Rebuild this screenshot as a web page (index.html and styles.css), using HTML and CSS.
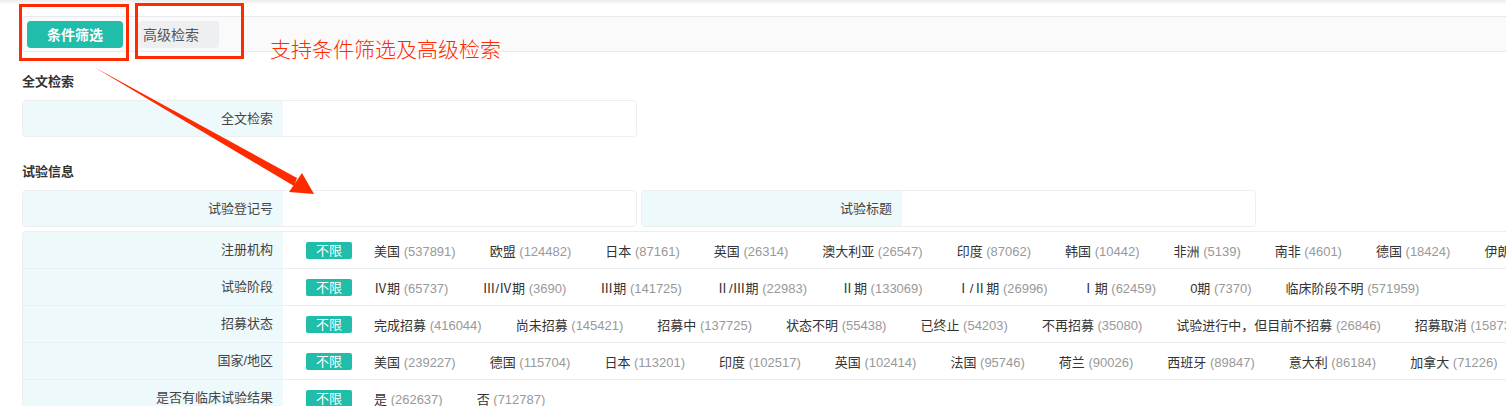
FILE: index.html
```html
<!DOCTYPE html>
<html lang="zh-CN">
<head>
<meta charset="utf-8">
<title>条件筛选</title>
<link rel="stylesheet" href="styles.css">
</head>
<body>
<div class="top-shade"></div>
<div class="page">
  <div class="tabs">
    <button class="tab tab-active">条件筛选</button>
    <button class="tab tab-plain">高级检索</button>
  </div>

  <h3 class="section-title">全文检索</h3>
  <div class="field-row">
    <div class="field">
      <div class="field-label">全文检索</div>
      <div class="field-input"></div>
    </div>
  </div>

  <h3 class="section-title section-title-2">试验信息</h3>
  <div class="field-row">
    <div class="field">
      <div class="field-label">试验登记号</div>
      <div class="field-input"></div>
    </div>
    <div class="field">
      <div class="field-label">试验标题</div>
      <div class="field-input"></div>
    </div>
  </div>

  <div class="filters">
    <div class="filter-row">
      <div class="filter-label">注册机构</div>
      <div class="filter-items">
        <span class="tag">不限</span>
        <span class="item">美国 <em>(537891)</em></span>
        <span class="item">欧盟 <em>(124482)</em></span>
        <span class="item">日本 <em>(87161)</em></span>
        <span class="item">英国 <em>(26314)</em></span>
        <span class="item">澳大利亚 <em>(26547)</em></span>
        <span class="item">印度 <em>(87062)</em></span>
        <span class="item">韩国 <em>(10442)</em></span>
        <span class="item">非洲 <em>(5139)</em></span>
        <span class="item">南非 <em>(4601)</em></span>
        <span class="item">德国 <em>(18424)</em></span>
        <span class="item">伊朗 <em>(9021)</em></span>
      </div>
    </div>
    <div class="filter-row">
      <div class="filter-label">试验阶段</div>
      <div class="filter-items">
        <span class="tag">不限</span>
        <span class="item">Ⅳ期 <em>(65737)</em></span>
        <span class="item">Ⅲ/Ⅳ期 <em>(3690)</em></span>
        <span class="item">Ⅲ期 <em>(141725)</em></span>
        <span class="item">Ⅱ/Ⅲ期 <em>(22983)</em></span>
        <span class="item">Ⅱ期 <em>(133069)</em></span>
        <span class="item">Ⅰ/Ⅱ期 <em>(26996)</em></span>
        <span class="item">Ⅰ期 <em>(62459)</em></span>
        <span class="item">0期 <em>(7370)</em></span>
        <span class="item">临床阶段不明 <em>(571959)</em></span>
      </div>
    </div>
    <div class="filter-row">
      <div class="filter-label">招募状态</div>
      <div class="filter-items">
        <span class="tag">不限</span>
        <span class="item">完成招募 <em>(416044)</em></span>
        <span class="item">尚未招募 <em>(145421)</em></span>
        <span class="item">招募中 <em>(137725)</em></span>
        <span class="item">状态不明 <em>(55438)</em></span>
        <span class="item">已终止 <em>(54203)</em></span>
        <span class="item">不再招募 <em>(35080)</em></span>
        <span class="item">试验进行中，但目前不招募 <em>(26846)</em></span>
        <span class="item">招募取消 <em>(15873)</em></span>
      </div>
    </div>
    <div class="filter-row">
      <div class="filter-label">国家/地区</div>
      <div class="filter-items">
        <span class="tag">不限</span>
        <span class="item">美国 <em>(239227)</em></span>
        <span class="item">德国 <em>(115704)</em></span>
        <span class="item">日本 <em>(113201)</em></span>
        <span class="item">印度 <em>(102517)</em></span>
        <span class="item">英国 <em>(102414)</em></span>
        <span class="item">法国 <em>(95746)</em></span>
        <span class="item">荷兰 <em>(90026)</em></span>
        <span class="item">西班牙 <em>(89847)</em></span>
        <span class="item">意大利 <em>(86184)</em></span>
        <span class="item">加拿大 <em>(71226)</em></span>
      </div>
    </div>
    <div class="filter-row">
      <div class="filter-label">是否有临床试验结果</div>
      <div class="filter-items">
        <span class="tag">不限</span>
        <span class="item">是 <em>(262637)</em></span>
        <span class="item">否 <em>(712787)</em></span>
      </div>
    </div>
  </div>
</div>

<div class="annot-box annot-box-1"></div>
<div class="annot-box annot-box-2"></div>
<div class="annot-text">支持条件筛选及高级检索</div>
<svg class="annot-arrow" width="1506" height="406" viewBox="0 0 1506 406">
  <polygon points="94,67 297,178 294,186" fill="#ff2a00"/>
  <polygon points="314,194 289,192 302,173" fill="#ff2a00"/>
</svg>
</body>
</html>
```

FILE: styles.css
```css
html, body {
  margin: 0;
  padding: 0;
  background: #fff;
  overflow: hidden;
  width: 1506px;
  height: 406px;
}

body {
  position: relative;
  font-family: "Liberation Sans", "Noto Sans CJK SC", sans-serif;
  font-size: 13px;
  color: #333;
}

.top-shade {
  height: 5px;
  background: linear-gradient(#ececec, #ffffff);
}

.page {
  padding: 11px 0 0 22px;
}

.tabs {
  display: flex;
  align-items: center;
  height: 36px;
  box-sizing: border-box;
  background: #fafafa;
  border: 1px solid #e8eaed;
  border-right: none;
  border-radius: 4px 0 0 4px;
  padding-left: 4px;
}

.tab {
  border: none;
  height: 27px;
  border-radius: 4px;
  font-family: inherit;
  font-size: 14px;
  padding: 0;
  cursor: pointer;
}

.tab-active {
  width: 96px;
  background: #20bdaa;
  color: #fff;
  font-weight: bold;
}

.tab-plain {
  width: 81px;
  margin-left: 15px;
  background: #eeeff1;
  color: #555;
  text-align: left;
  padding-left: 5px;
}

.section-title {
  margin: 0;
  font-size: 13px;
  font-weight: bold;
  color: #333;
  line-height: 18px;
  padding-top: 21px;
  padding-bottom: 9px;
}

.section-title-2 {
  padding-top: 26px;
}

.field-row {
  display: flex;
  gap: 4px;
}

.field {
  display: flex;
  width: 615px;
  height: 37px;
  box-sizing: border-box;
  border: 1px solid #eceeef;
  border-radius: 4px;
  overflow: hidden;
}

.field-label {
  width: 260px;
  flex: none;
  background: #eef9fb;
  text-align: right;
  padding-right: 10px;
  box-sizing: border-box;
  line-height: 35px;
  color: #444;
}

.field-input {
  flex: 1;
  background: #fff;
}

.filters {
  margin-top: 4px;
  width: 1600px;
  border: 1px solid #eceeef;
  border-radius: 4px;
  overflow: hidden;
}

.filter-row {
  display: flex;
  height: 37px;
  border-top: 1px solid #ebedef;
  box-sizing: border-box;
}

.filter-row:first-child {
  border-top: none;
  height: 36px;
}

.filter-label {
  width: 260px;
  flex: none;
  background: #eef9fb;
  text-align: right;
  padding-right: 10px;
  box-sizing: border-box;
  line-height: 36px;
  color: #444;
  white-space: nowrap;
}

.filter-items {
  display: flex;
  align-items: center;
  white-space: nowrap;
  padding-left: 23px;
  gap: 34px;
}

.tag {
  display: inline-block;
  width: 46px;
  height: 17px;
  line-height: 17px;
  text-align: center;
  background: #20bdaa;
  color: #fff;
  border-radius: 2px;
  margin-right: -12px;
}

.item {
  color: #333;
}

.item em {
  font-style: normal;
  color: #999;
}

.annot-box {
  position: absolute;
  border: 3px solid #ff2a00;
  box-sizing: border-box;
}

.annot-box-1 {
  left: 19px;
  top: 4px;
  width: 110px;
  height: 57px;
}

.annot-box-2 {
  left: 135px;
  top: 3px;
  width: 109px;
  height: 56px;
}

.annot-text {
  position: absolute;
  left: 270px;
  top: 36px;
  font-size: 21px;
  line-height: 24px;
  color: #ff2a00;
  font-family: "Noto Sans CJK SC", sans-serif;
  font-weight: 300;
}

.annot-arrow {
  position: absolute;
  left: 0;
  top: 0;
  pointer-events: none;
}
```
